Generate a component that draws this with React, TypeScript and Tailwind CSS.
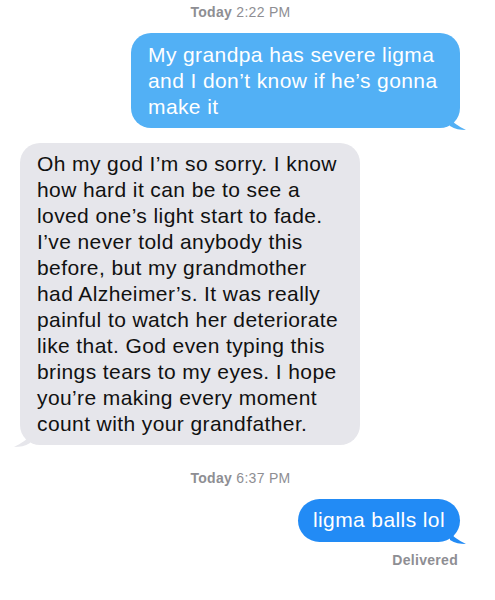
const font = { fontFamily: '"Liberation Sans", Arial, sans-serif' };

function Stamp({ day, time }: { day: string; time: string }) {
  return (
    <p className="text-center text-[14px] leading-[18px] tracking-[0.3px] text-[#8e8e93] pr-[14px]">
      <span className="font-bold">{day}</span> {time}
    </p>
  );
}

function Lines({ lines }: { lines: string[] }) {
  return (
    <>
      {lines.map((l) => (
        <span key={l} className="block whitespace-nowrap">
          {l}
        </span>
      ))}
    </>
  );
}

function SentTail({ color }: { color: string }) {
  return (
    <svg className="absolute -right-[6px] bottom-[-3px]" width="16" height="14" viewBox="0 0 16 14">
      <path d="M0 2 C 4 6, 8 9, 16 13 C 10 13, 5 12, 0 9 Z" fill={color} />
    </svg>
  );
}

function RecvTail() {
  return (
    <svg className="absolute -left-[6px] bottom-[-3px]" width="16" height="14" viewBox="0 0 16 14">
      <path d="M16 2 C 12 6, 8 9, 0 13 C 6 13, 11 12, 16 9 Z" fill="#e6e6eb" />
    </svg>
  );
}

export default function App() {
  return (
    <div className="w-[495px] h-[600px] bg-white overflow-hidden" style={font}>
      <div className="pt-[3px]">
        <Stamp day="Today" time="2:22 PM" />
      </div>

      <div className="flex justify-end pr-[35px] mt-[12px]">
        <div className="relative bg-[#52b0f5] text-white rounded-[20px] pl-[17px] pr-[14px] pt-[9px] pb-[8px] text-[21px] leading-[26px] tracking-[0.4px] w-[329px]">
          <Lines lines={["My grandpa has severe ligma", "and I don\u2019t know if he\u2019s gonna", "make it"]} />
          <SentTail color="#52b0f5" />
        </div>
      </div>

      <div className="flex justify-start pl-[20px] mt-[15px]">
        <div className="relative bg-[#e6e6eb] text-[#111] rounded-[20px] pl-[17px] pr-[14px] pt-[8px] pb-[8px] text-[21px] leading-[26px] tracking-[0.4px] w-[340px]">
          <Lines
            lines={[
              "Oh my god I\u2019m so sorry. I know",
              "how hard it can be to see a",
              "loved one\u2019s light start to fade.",
              "I\u2019ve never told anybody this",
              "before, but my grandmother",
              "had Alzheimer\u2019s. It was really",
              "painful to watch her deteriorate",
              "like that. God even typing this",
              "brings tears to my eyes. I hope",
              "you\u2019re making every moment",
              "count with your grandfather.",
            ]}
          />
          <RecvTail />
        </div>
      </div>

      <div className="mt-[24px]">
        <Stamp day="Today" time="6:37 PM" />
      </div>

      <div className="flex justify-end pr-[35px] mt-[12px]">
        <div className="relative bg-[#228bf5] text-white rounded-[22px] px-[15px] pt-[8px] pb-[9px] text-[21px] leading-[26px] tracking-[0.4px]">
          <span className="block whitespace-nowrap">ligma balls lol</span>
          <SentTail color="#228bf5" />
        </div>
      </div>

      <p className="text-right pr-[37px] mt-[10px] text-[14px] leading-[16px] tracking-[0.3px] font-bold text-[#8e8e93]">Delivered</p>
    </div>
  );
}
